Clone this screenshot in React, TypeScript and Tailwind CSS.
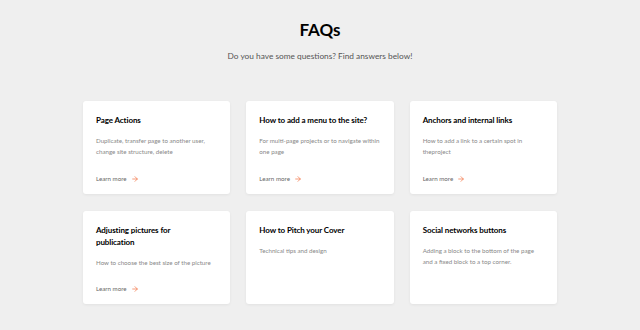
import { ArrowRight } from 'lucide-react';

interface Faq {
  title: string;
  text: string;
  link: boolean;
  titleWidth?: string;
}

const faqs: Faq[] = [
  { title: 'Page Actions', text: 'Duplicate, transfer page to another user, change site structure, delete', link: true },
  { title: 'How to add a menu to the site?', text: 'For multi-page projects or to navigate within one page', link: true },
  { title: 'Anchors and internal links', text: 'How to add a link to a certain spot in theproject', link: true },
  {
    title: 'Adjusting pictures for publication',
    text: 'How to choose the best size of the picture',
    link: true,
    titleWidth: 'max-w-[105px]',
  },
  { title: 'How to Pitch your Cover', text: 'Technical tips and design', link: false },
  { title: 'Social networks buttons', text: 'Adding a block to the bottom of the page and a fixed block to a top corner.', link: false },
];

function FaqCard({ faq }: { faq: Faq }) {
  return (
    <div className="flex h-[93px] flex-col rounded-[3px] bg-white px-[13px] pt-[13px] pb-[10px] shadow-[0_1px_3px_rgba(0,0,0,0.06)]">
      <h3 className={`text-[8px] leading-[12px] font-bold tracking-[-0.1px] text-black ${faq.titleWidth ?? ''}`}>
        {faq.title}
      </h3>
      <p className="mt-[9px] text-[6.2px] leading-[11px] text-[#888]">{faq.text}</p>
      {faq.link && (
        <a className="mt-auto flex items-center gap-[4px] text-[6.2px] leading-[10px] text-[#666]">
          Learn more
          <ArrowRight size={8} strokeWidth={2} className="text-[#f26b3a]" />
        </a>
      )}
    </div>
  );
}

export default function App() {
  return (
    <div className="flex h-[330px] w-[640px] flex-col items-center bg-[#efefef] pt-[20px] font-['Lato',sans-serif]">
      <h1 className="text-[17px] leading-[20px] font-bold text-black">FAQs</h1>
      <p className="mt-[10px] text-[8.3px] leading-[12px] text-[#555]">Do you have some questions? Find answers below!</p>
      <div className="mt-[39px] grid w-[474px] grid-cols-3 gap-x-[16px] gap-y-[17px]">
        {faqs.map((faq) => (
          <FaqCard key={faq.title} faq={faq} />
        ))}
      </div>
    </div>
  );
}
